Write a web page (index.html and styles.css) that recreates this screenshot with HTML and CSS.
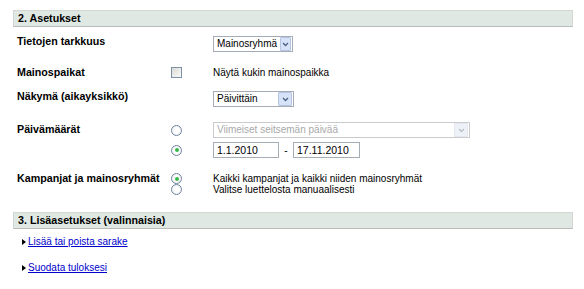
FILE: index.html
```html
<!DOCTYPE html>
<html lang="fi">
<head>
    <meta charset="UTF-8">
    <title>Asetukset</title>
    <link rel="stylesheet" href="styles.css">
</head>
<body>
    <div class="container">
        <div class="section-title">2. Asetukset</div>

        <div class="row row-detail">
            <div class="label">Tietojen tarkkuus</div>
            <div class="opt"></div>
            <div class="ctrl">
                <div class="select sel-group">
                    <span class="sel-text">Mainosryhmä</span>
                    <span class="sel-btn"><svg width="7" height="5" viewBox="0 0 7 5"><path d="M1 1l2.5 2.5L6 1" fill="none" stroke="#4d6185" stroke-width="1.3"/></svg></span>
                </div>
            </div>
        </div>

        <div class="row row-place">
            <div class="label">Mainospaikat</div>
            <div class="opt"><span class="checkbox"></span></div>
            <div class="ctrl">Näytä kukin mainospaikka</div>
        </div>

        <div class="row row-view">
            <div class="label">Näkymä (aikayksikkö)</div>
            <div class="opt"></div>
            <div class="ctrl">
                <div class="select sel-day">
                    <span class="sel-text">Päivittäin</span>
                    <span class="sel-btn"><svg width="7" height="5" viewBox="0 0 7 5"><path d="M1 1l2.5 2.5L6 1" fill="none" stroke="#4d6185" stroke-width="1.3"/></svg></span>
                </div>
            </div>
        </div>

        <div class="row row-dates">
            <div class="label">Päivämäärät</div>
            <div class="opt"><span class="radio"></span></div>
            <div class="ctrl">
                <div class="select sel-range disabled">
                    <span class="sel-text">Viimeiset seitsemän päivää</span>
                    <span class="sel-btn"><svg width="7" height="5" viewBox="0 0 7 5"><path d="M1 1l2.5 2.5L6 1" fill="none" stroke="#b9bfc8" stroke-width="1.3"/></svg></span>
                </div>
            </div>
        </div>
        <div class="row row-dates2">
            <div class="label"></div>
            <div class="opt"><span class="radio checked"></span></div>
            <div class="ctrl date-range">
                <input class="date" type="text" value="1.1.2010">
                <span class="dash">-</span>
                <input class="date" type="text" value="17.11.2010">
            </div>
        </div>

        <div class="row row-camp">
            <div class="label">Kampanjat ja mainosryhmät</div>
            <div class="opt stack">
                <span class="radio checked"></span>
                <span class="radio"></span>
            </div>
            <div class="ctrl stack">
                <span>Kaikki kampanjat ja kaikki niiden mainosryhmät</span>
                <span>Valitse luettelosta manuaalisesti</span>
            </div>
        </div>

        <div class="section-title second">3. Lisäasetukset (valinnaisia)</div>

        <div class="links">
            <div class="link-row"><span class="arrow"></span><a href="#">Lisää tai poista sarake</a></div>
            <div class="link-row"><span class="arrow"></span><a href="#">Suodata tuloksesi</a></div>
        </div>
    </div>
</body>
</html>
```

FILE: styles.css
```css
body {
    margin: 0;
    background: #ffffff;
    font-family: 'Liberation Sans', Arial, sans-serif;
    font-size: 10px;
    color: #000000;
}

.container {
    width: 560px;
    margin-left: 13px;
    padding-top: 10px;
}

.section-title {
    height: 15px;
    line-height: 15px;
    padding-left: 4px;
    background: #dfe8e2;
    border: 1px solid #d3d6d3;
    border-bottom-color: #b9bcb9;
    font-size: 10.7px;
    font-weight: bold;
}

.section-title.second {
    margin-top: 17px;
}

.row {
    display: grid;
    grid-template-columns: 153px 43px 1fr;
    align-items: start;
    padding-left: 4px;
}

.label {
    font-size: 10.7px;
    font-weight: bold;
}

.opt {
    display: flex;
    justify-content: flex-start;
    padding-left: 1px;
}

.ctrl {
    display: flex;
    align-items: center;
}

.row-detail { margin-top: 8px; }
.row-detail .ctrl { padding-top: 1px; }

.row-place { margin-top: 14px; align-items: center; }

.row-view { margin-top: 12px; }
.row-view .ctrl { padding-top: 1px; }

.row-dates { margin-top: 15px; }
.row-dates .label { padding-top: 1px; }
.row-dates .opt { padding-top: 3px; }
.row-dates2 { margin-top: 4px; align-items: center; }

.row-camp { margin-top: 13px; }
.row-camp .label { padding-top: 1px; }

.stack {
    display: flex;
    flex-direction: column;
    align-items: flex-start;
    padding-top: 2px;
}

.ctrl.stack {
    line-height: 11px;
}

.select {
    box-sizing: border-box;
    display: flex;
    align-items: center;
    height: 16px;
    border: 1px solid #a5acb5;
    background: #ffffff;
    padding: 0 1px 0 3px;
}

.sel-text {
    flex: 1;
    white-space: nowrap;
    line-height: 14px;
}

.sel-btn {
    display: flex;
    align-items: center;
    justify-content: center;
    width: 12px;
    height: 12px;
    margin-left: 3px;
    border: 1px solid #b5c4e0;
    background: #d6e2f7;
    border-radius: 1px;
}

.sel-group { width: 80px; }
.sel-day { width: 81px; }

.sel-range {
    width: 257px;
}

.select.disabled {
    border-color: #c9cacc;
    color: #a9a9a9;
}

.select.disabled .sel-btn {
    background: #eef2f8;
    border-color: #e4e8ee;
}

.checkbox {
    display: block;
    width: 9px;
    height: 9px;
    border: 1px solid #7f8fa5;
    background: linear-gradient(135deg, #dcdcd6, #fafaf8);
}

.radio {
    display: block;
    box-sizing: border-box;
    width: 11px;
    height: 11px;
    border: 1px solid #6f86a6;
    border-radius: 50%;
    background: radial-gradient(circle, #ffffff 40%, #e3e4de 100%);
    position: relative;
}

.radio.checked::after {
    content: '';
    position: absolute;
    left: 2.5px;
    top: 2.5px;
    width: 4px;
    height: 4px;
    border-radius: 50%;
    background: #37b74b;
}

.date {
    box-sizing: border-box;
    width: 66px;
    height: 16px;
    padding: 0 3px;
    margin: 0;
    border: 1px solid #a5acb5;
    font-family: 'Liberation Sans', Arial, sans-serif;
    font-size: 10.5px;
    color: #000000;
}

.date + .dash + .date {
    width: 67px;
}

.dash {
    width: 14px;
    text-align: center;
}

.links {
    padding-left: 9px;
    padding-top: 6px;
}

.link-row {
    display: flex;
    align-items: center;
    height: 13px;
    margin-bottom: 13px;
}

.arrow {
    width: 0;
    height: 0;
    border-top: 3.5px solid transparent;
    border-bottom: 3.5px solid transparent;
    border-left: 4px solid #000000;
    margin-right: 2px;
}

.link-row a {
    color: #0000cc;
    text-decoration: underline;
}
```
